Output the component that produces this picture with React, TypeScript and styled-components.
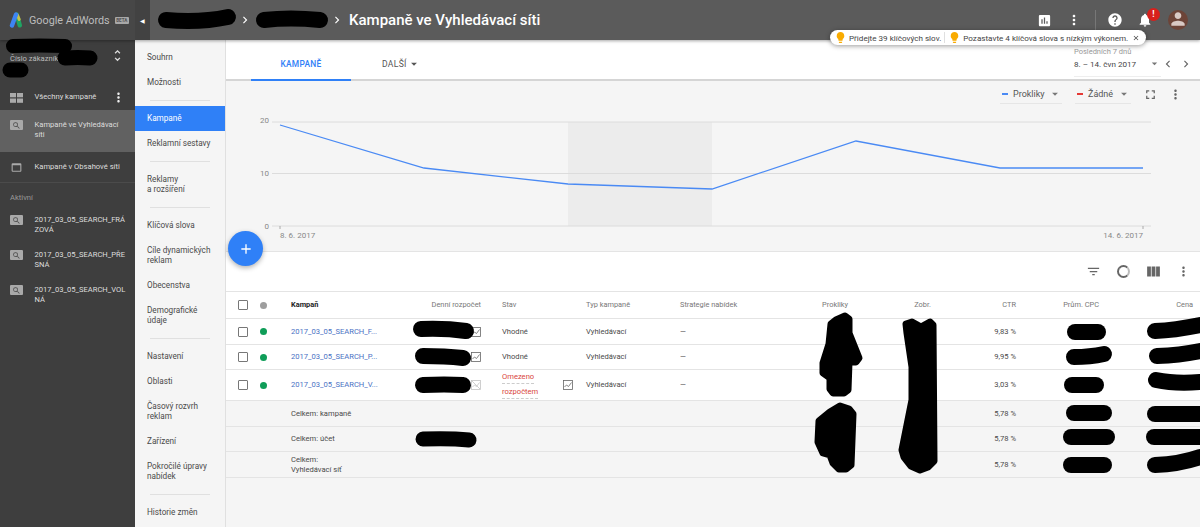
import React from 'react';
import styled, { createGlobalStyle } from 'styled-components';
import {
  MdArrowDropDown,
  MdChevronLeft,
  MdChevronRight,
  MdClose,
  MdFilterList,
  MdFullscreen,
  MdHelp,
  MdLightbulb,
  MdMoreVert,
  MdNotifications,
  MdPerson,
  MdSearch,
  MdViewColumn,
  MdWebAsset,
  MdAssessment,
  MdUnfoldMore,
  MdAdd,
} from 'react-icons/md';

const GlobalStyle = createGlobalStyle`
  html, body {
    margin: 0;
    height: 100%;
    overflow: hidden;
  }
  body {
    font-family: Roboto, "Liberation Sans", sans-serif;
    font-size: 7.6px;
    color: #4a4a4a;
    background: #f5f5f5;
  }
  * {
    box-sizing: border-box;
  }
`;

const Page = styled.div`
  position: relative;
  width: 1200px;
  height: 527px;
  overflow: hidden;
  display: flex;
  flex-direction: column;
`;

/* ---------- header ---------- */

const Header = styled.header`
  position: relative;
  z-index: 3;
  height: 40px;
  flex: none;
  display: flex;
  align-items: center;
  background: #5b5b5b;
  box-shadow: 0 1px 3px rgba(0, 0, 0, 0.35);
  color: #fff;
`;

const Brand = styled.div`
  width: 135px;
  height: 100%;
  flex: none;
  display: flex;
  align-items: center;
  padding-left: 9px;
  background: #474747;
`;

const BrandName = styled.span`
  margin-left: 4px;
  font-size: 10.8px;
  color: #bdbdbd;
  white-space: nowrap;
`;

const BetaTag = styled.span`
  margin-left: 5px;
  padding: 1px 1.5px;
  border-radius: 1px;
  background: #a8a8a8;
  color: #555;
  font-size: 4.6px;
  font-weight: 700;
`;

const Collapse = styled.div`
  width: 15px;
  height: 100%;
  flex: none;
  display: flex;
  align-items: center;
  justify-content: center;
  background: #424242;
  font-size: 6px;
`;

const Crumbs = styled.div`
  flex: 1;
  display: flex;
  align-items: center;
  padding-left: 8px;
`;

const CrumbSlot = styled.span<{ $w: number }>`
  width: ${(p) => p.$w}px;
`;

const Title = styled.h1`
  margin: 0 0 0 5px;
  font-size: 15px;
  font-weight: 500;
  color: #fff;
`;

const HeaderIcons = styled.div`
  display: flex;
  align-items: center;
  padding-right: 12px;
`;

const HeaderIcon = styled.span`
  position: relative;
  width: 30px;
  display: flex;
  align-items: center;
  justify-content: center;
`;

const HeaderRule = styled.span`
  width: 1px;
  height: 20px;
  margin: 0 4px 0 6px;
  background: #777;
`;

const AlertBadge = styled.span`
  position: absolute;
  top: -4px;
  left: 17px;
  width: 13px;
  height: 13px;
  border-radius: 50%;
  background: #d8201c;
  color: #fff;
  font-size: 8.5px;
  font-weight: 700;
  line-height: 13px;
  text-align: center;
`;

const Avatar = styled.span`
  width: 20px;
  height: 20px;
  margin-left: 8px;
  border-radius: 50%;
  overflow: hidden;
  display: flex;
  align-items: flex-end;
  justify-content: center;
  background: #6d4438;
  color: #d9c9c4;
`;

const Hints = styled.div`
  position: absolute;
  z-index: 4;
  top: 30px;
  left: 830px;
  width: 316px;
  height: 15px;
  padding: 0 6px 0 4px;
  border-radius: 8px;
  background: #fff;
  box-shadow: 0 1px 5px rgba(0, 0, 0, 0.4);
  display: flex;
  align-items: center;
  font-size: 8.1px;
  color: #444;
  white-space: nowrap;
`;

const HintBulb = styled(MdLightbulb)`
  flex: none;
  color: #f9ab00;
  margin-right: 2px;
`;

const HintGap = styled.span`
  width: 1px;
  height: 11px;
  margin: 0 3px;
  background: #e0e0e0;
`;

const HintClose = styled(MdClose)`
  margin-left: auto;
`;

/* ---------- sidebar ---------- */

const Body = styled.div`
  flex: 1;
  min-height: 0;
  display: flex;
`;

const Sidebar = styled.aside`
  width: 135px;
  flex: none;
  background: #3e3e3e;
  color: #ddd;
`;

const Account = styled.div`
  height: 45px;
  padding: 8px 10px 0 10px;
  display: flex;
  align-items: flex-start;
  justify-content: space-between;
  color: #bbb;
`;

const AccountLabel = styled.span`
  margin-top: 6px;
  line-height: 10px;
`;

const SideRow = styled.div<{ $active?: boolean; $h: number; $top?: boolean }>`
  height: ${(p) => p.$h}px;
  display: flex;
  align-items: ${(p) => (p.$top ? 'flex-start' : 'center')};
  padding-top: ${(p) => (p.$active ? 10 : 0)}px;
  padding-left: 10px;
  background: ${(p) => (p.$active ? '#616161' : 'transparent')};
  line-height: 10.3px;
`;

const SideIcon = styled.span`
  width: 13px;
  height: 10px;
  margin-right: 11.5px;
  flex: none;
  display: flex;
  align-items: center;
  justify-content: center;
  border-radius: 1px;
  background: #a9a9a9;
  color: #4a4a4a;
`;

const PlainIcon = styled.span`
  width: 13px;
  margin-right: 11.5px;
  flex: none;
  display: flex;
  align-items: center;
  justify-content: center;
  color: #aaa;
`;

const SideText = styled.span`
  flex: none;
  width: 91px;
  overflow-wrap: anywhere;
`;

const ShortText = styled(SideText)`
  width: 76px;
`;

const SideLabel = styled.div`
  height: 33px;
  border-top: 1px solid #4b4b4b;
  padding: 10px 0 0 10px;
  color: #999;
  line-height: 10px;
`;

/* ---------- second nav ---------- */

const Nav = styled.nav`
  width: 91px;
  flex: none;
  padding-top: 4.5px;
  background: #f5f5f5;
  border-right: 1px solid #e0e0e0;
  font-size: 8.2px;
`;

const NavItem = styled.div<{ $active?: boolean; $tall?: boolean }>`
  height: ${(p) => (p.$tall ? 35 : 25)}px;
  padding-left: 12px;
  display: flex;
  align-items: center;
  line-height: 10.5px;
  background: ${(p) => (p.$active ? '#2f80f7' : 'transparent')};
  color: ${(p) => (p.$active ? '#fff' : '#4a4a4a')};
`;

const NavRule = styled.div`
  height: 1px;
  margin: 5px 15px;
  background: #e0e0e0;
`;

/* ---------- main ---------- */

const Main = styled.main`
  flex: 1;
  min-width: 0;
  display: flex;
  flex-direction: column;
`;

const Tabs = styled.div`
  height: 41px;
  flex: none;
  display: flex;
  background: #fff;
  border-bottom: 2px solid #d5d5d5;
  padding-left: 25px;
`;

const Tab = styled.div`
  width: 100px;
  height: 41px;
  padding-top: 19px;
  text-align: center;
  border-bottom: 2px solid #2f80f7;
  color: #2f80f7;
  font-size: 8.4px;
  font-weight: 500;
  letter-spacing: 0.3px;
`;

const MoreTab = styled.div`
  margin-left: 31px;
  padding-top: 19px;
  display: flex;
  align-items: flex-start;
  color: #555;
  font-size: 8.6px;
  letter-spacing: 0.3px;
`;

const MoreCaret = styled(MdArrowDropDown)`
  margin-top: -2px;
`;

const DateBox = styled.div`
  margin-left: auto;
  padding: 7px 7px 0 0;
  display: flex;
  align-items: flex-start;
`;

const DateField = styled.div`
  width: 87px;
  height: 30px;
  border-bottom: 1px solid #eee;
  color: #444;
  font-size: 8.1px;
`;

const DateHint = styled.div`
  color: #999;
  font-size: 7.5px;
  line-height: 9px;
`;

const DateValue = styled.div`
  display: flex;
  align-items: center;
  justify-content: space-between;
  margin-top: 1px;
  line-height: 12px;
`;

const DateArrows = styled.div`
  display: flex;
  padding-top: 10px;
  color: #666;
  gap: 4px;
`;

const ChartPanel = styled.section`
  height: 171px;
  flex: none;
  background: #f5f5f5;
  border-bottom: 1px solid #e4e4e4;
  overflow: hidden;
`;

const ChartBar = styled.div`
  height: 31px;
  display: flex;
  justify-content: flex-end;
  align-items: flex-start;
  padding: 4px 14px 0 0;
  color: #555;
  font-size: 9px;
`;

const LegendPick = styled.div<{ $w: number; $gap: number }>`
  width: ${(p) => p.$w}px;
  height: 19px;
  margin-right: ${(p) => p.$gap}px;
  padding-left: 2px;
  display: flex;
  align-items: center;
  border-bottom: 1px solid #e6e6e6;
`;

const LegendSwatch = styled.span<{ $color: string }>`
  width: 6px;
  height: 2px;
  margin-right: 5px;
  background: ${(p) => p.$color};
`;

const LegendText = styled.span`
  flex: 1;
`;

const ChartIcon = styled.span`
  width: 22px;
  height: 19px;
  margin-left: 3px;
  display: flex;
  align-items: center;
  justify-content: center;
  color: #666;
`;

const ChartSvg = styled.svg`
  display: block;
  font-family: Roboto, "Liberation Sans", sans-serif;
`;

const Fab = styled.div`
  position: absolute;
  z-index: 2;
  top: 231px;
  left: 228px;
  width: 35px;
  height: 35px;
  border-radius: 50%;
  background: #2f80f7;
  color: #fff;
  box-shadow: 0 2px 5px rgba(0, 0, 0, 0.3);
  display: flex;
  align-items: center;
  justify-content: center;
`;

const TableBar = styled.div`
  height: 40px;
  flex: none;
  background: #fff;
  border-bottom: 1px solid #e4e4e4;
  display: flex;
  align-items: center;
  justify-content: flex-end;
  padding-right: 2px;
  color: #666;
`;

const TableIcon = styled.span`
  width: 30px;
  display: flex;
  justify-content: center;
`;

const Ring = styled.span`
  width: 13px;
  height: 13px;
  border: 2px solid #666;
  border-right-color: #bbb;
  border-radius: 50%;
`;

const TABLE_COLUMNS = '34px 8px 23px 110px 80px 21px 84px 94px 90px 78px 83px 85px 83px 94px 7px';

const Row = styled.div<{ $h: number; $total?: boolean }>`
  height: ${(p) => p.$h}px;
  flex: none;
  display: grid;
  grid-template-columns: ${TABLE_COLUMNS};
  align-items: center;
  background: ${(p) => (p.$total ? '#f5f5f5' : '#fff')};
  border-bottom: 1px solid #e4e4e4;
  line-height: 10px;
`;

const HeadCell = styled.div<{ $right?: boolean; $strong?: boolean }>`
  text-align: ${(p) => (p.$right ? 'right' : 'left')};
  color: ${(p) => (p.$strong ? '#222' : '#777')};
  font-weight: ${(p) => (p.$strong ? 700 : 400)};
  font-size: 7.4px;
  white-space: nowrap;
`;

const Cell = styled.div<{ $right?: boolean; $span?: number }>`
  text-align: ${(p) => (p.$right ? 'right' : 'left')};
  grid-column: ${(p) => (p.$span ? `span ${p.$span}` : 'auto')};
  white-space: nowrap;
`;

const CheckCell = styled.div`
  display: flex;
  justify-content: center;
`;

const Check = styled.span`
  width: 10px;
  height: 10px;
  border: 1.3px solid #777;
  border-radius: 1px;
`;

const Dot = styled.span<{ $color: string }>`
  display: block;
  width: 7px;
  height: 7px;
  border-radius: 50%;
  background: ${(p) => p.$color};
`;

const CampaignLink = styled.span`
  color: #4a72c4;
  white-space: nowrap;
`;

const BudgetCell = styled.div`
  display: flex;
  justify-content: flex-end;
`;

const LimitedCell = styled.div`
  display: flex;
  align-items: center;
  justify-content: space-between;
  padding-right: 13px;
`;

const Limited = styled.span`
  color: #d9453d;
  line-height: 13px;
`;

const LimitedWord = styled.span`
  display: block;
  margin-bottom: 1px;
  border-bottom: 1px dashed #ccc;
  width: fit-content;
`;

const TotalName = styled(Cell)`
  grid-column: 4;
  white-space: normal;
  line-height: 9.5px;
`;

const Filler = styled.div`
  flex: 1;
  background: #f5f5f5;
`;

const Redactions = styled.svg`
  position: absolute;
  z-index: 5;
  top: 0;
  left: 0;
  pointer-events: none;
`;

const Logo = () => (
  <svg width="16" height="16" viewBox="0 0 16 16">
    <path d="M10.5 13.5 L8 2.6" stroke="#1fa463" strokeWidth="4.4" strokeLinecap="round" transform="rotate(-3 8 8)" />
    <path d="M8.4 3 L10.2 7.4" stroke="#c9c24a" strokeWidth="3" strokeLinecap="round" />
    <path d="M3 13.5 L7 2.6" stroke="#3d84f3" strokeWidth="4.4" strokeLinecap="round" />
  </svg>
);

const GridIcon = () => (
  <svg width="13" height="10" viewBox="0 0 13 10" fill="#aaa">
    <rect x="0" y="0" width="6" height="4.3" />
    <rect x="7" y="0" width="6" height="4.3" />
    <rect x="0" y="5.5" width="6" height="4.3" />
    <rect x="7" y="5.5" width="6" height="4.3" />
  </svg>
);

const TrendBox = ({ muted }: { muted?: boolean }) => (
  <svg width="10" height="10" viewBox="0 0 10 10" fill="none" stroke={muted ? '#c4c4c4' : '#666'} strokeWidth="0.8">
    <rect x="0.5" y="0.5" width="9" height="9" />
    <polyline points="1.5,7 3.5,5 5.5,6.5 8.5,2.5" />
    {muted && <line x1="1" y1="1" x2="9" y2="9" />}
  </svg>
);

const chartPoints: [number, number][] = [
  [54, 3],
  [198, 46],
  [342, 62],
  [486, 67],
  [630, 19],
  [774, 46],
  [917, 46],
];

const Chart = () => (
  <ChartSvg width="974" height="139" viewBox="0 -10 974 139">
    <rect x="342" y="0" width="144" height="104" fill="#ececec" />
    {[0, 51.5, 104].map((y) => (
      <line key={y} x1="46" x2="925" y1={y} y2={y} stroke="#dcdcdc" strokeWidth="1" />
    ))}
    <text x="43" y="1" fontSize="8" fill="#888" textAnchor="end">20</text>
    <text x="43" y="54" fontSize="8" fill="#888" textAnchor="end">10</text>
    <text x="43" y="107" fontSize="8" fill="#888" textAnchor="end">0</text>
    <line x1="54" x2="54" y1="104" y2="107" stroke="#aaa" />
    <line x1="917" x2="917" y1="104" y2="107" stroke="#aaa" />
    <polyline
      points={chartPoints.map((p) => p.join(',')).join(' ')}
      fill="none"
      stroke="#4a8af4"
      strokeWidth="1.3"
    />
    <text x="54" y="116" fontSize="8" fill="#888">8. 6. 2017</text>
    <text x="917" y="116" fontSize="8" fill="#888" textAnchor="end">14. 6. 2017</text>
  </ChartSvg>
);

const strokes: { d: string; w: number }[] = [
  { d: 'M166 20 Q200 23 228 17', w: 16 },
  { d: 'M264 20 Q290 17 320 20', w: 16 },
  { d: 'M13 46 Q40 45 65 46', w: 14 },
  { d: 'M65 58 Q78 57 90 58', w: 15 },
  { d: 'M10 70 L21 70', w: 15 },
  { d: 'M421 329 Q445 328 466 331', w: 16 },
  { d: 'M423 356 Q445 356 463 358', w: 16 },
  { d: 'M423 385 Q445 384 463 385', w: 16 },
  { d: 'M423 439 Q450 438 469 440', w: 15 },
  { d: 'M1075 332 L1098 332', w: 16 },
  { d: 'M1074 357 Q1090 357 1104 354', w: 16 },
  { d: 'M1072 385 L1096 385', w: 16 },
  { d: 'M1074 413 L1104 413', w: 16 },
  { d: 'M1071 437 L1107 437', w: 16 },
  { d: 'M1071 465 L1104 465', w: 16 },
  { d: 'M1155 331 Q1175 330 1200 325', w: 16 },
  { d: 'M1157 356 Q1180 355 1200 351', w: 16 },
  { d: 'M1156 380 Q1175 384 1200 382', w: 16 },
  { d: 'M1155 414 L1200 414', w: 16 },
  { d: 'M1154 437 L1200 437', w: 16 },
  { d: 'M1155 465 Q1180 464 1200 457', w: 16 },
];

const blobs = [
  'M845 316 L849 319 L849 333 L859 358 L856 362 L849 362 L848 390 L844 393 L833 393 L830 389 L830 378 L823 373 L823 363 L829 344 L831 324 L836 320 Z',
  'M840 406 L849 409 L853 414 L851 465 L846 469 L839 469 L833 463 L830 455 L823 453 L818 442 L819 421 L830 412 Z',
  'M906 324 L912 322 L921 327 L930 322 L933 325 L934 461 L928 467 L920 470 L911 466 L904 457 L902 450 L912 400 L912 367 L907 333 Z',
];

const App = () => (
  <Page>
    <GlobalStyle />
    <Header>
      <Brand>
        <Logo />
        <BrandName>Google AdWords</BrandName>
        <BetaTag>BETA</BetaTag>
      </Brand>
      <Collapse>◀</Collapse>
      <Crumbs>
        <CrumbSlot $w={80} />
        <MdChevronRight size={14} />
        <CrumbSlot $w={78} />
        <MdChevronRight size={14} />
        <Title>Kampaně ve Vyhledávací síti</Title>
      </Crumbs>
      <HeaderIcons>
        <HeaderIcon>
          <MdAssessment size={15} />
        </HeaderIcon>
        <HeaderIcon>
          <MdMoreVert size={16} />
        </HeaderIcon>
        <HeaderRule />
        <HeaderIcon>
          <MdHelp size={16} />
        </HeaderIcon>
        <HeaderIcon>
          <MdNotifications size={16} />
          <AlertBadge>!</AlertBadge>
        </HeaderIcon>
        <Avatar>
          <MdPerson size={22} />
        </Avatar>
      </HeaderIcons>
    </Header>
    <Hints>
      <HintBulb size={13} />
      Přidejte 39 klíčových slov.
      <HintGap />
      <HintBulb size={13} />
      Pozastavte 4 klíčová slova s nízkým výkonem.
      <HintClose size={8} />
    </Hints>
    <Body>
      <Sidebar>
        <Account>
          <AccountLabel>Číslo zákazník</AccountLabel>
          <MdUnfoldMore size={15} color="#ddd" />
        </Account>
        <SideRow $h={25}>
          <PlainIcon>
            <GridIcon />
          </PlainIcon>
          <ShortText>Všechny kampaně</ShortText>
          <MdMoreVert size={15} color="#eee" />
        </SideRow>
        <SideRow $h={42} $active $top>
          <SideIcon>
            <MdSearch size={9} />
          </SideIcon>
          <SideText>Kampaně ve Vyhledávací síti</SideText>
        </SideRow>
        <SideRow $h={30}>
          <PlainIcon>
            <MdWebAsset size={15} />
          </PlainIcon>
          <SideText>Kampaně v Obsahové síti</SideText>
        </SideRow>
        <SideLabel>Aktivní</SideLabel>
        {['2017_03_05_SEARCH_FRÁZOVÁ', '2017_03_05_SEARCH_PŘESNÁ', '2017_03_05_SEARCH_VOLNÁ'].map((name) => (
          <SideRow $h={35} $top key={name}>
            <SideIcon>
              <MdSearch size={9} />
            </SideIcon>
            <SideText>{name}</SideText>
          </SideRow>
        ))}
      </Sidebar>
      <Nav>
        <NavItem>Souhrn</NavItem>
        <NavItem>Možnosti</NavItem>
        <NavRule />
        <NavItem $active>Kampaně</NavItem>
        <NavItem>Reklamní sestavy</NavItem>
        <NavRule />
        <NavItem $tall>
          Reklamy
          <br />a rozšíření
        </NavItem>
        <NavRule />
        <NavItem>Klíčová slova</NavItem>
        <NavItem $tall>
          Cíle dynamických
          <br />
          reklam
        </NavItem>
        <NavItem>Obecenstva</NavItem>
        <NavItem $tall>
          Demografické
          <br />
          údaje
        </NavItem>
        <NavRule />
        <NavItem>Nastavení</NavItem>
        <NavItem>Oblasti</NavItem>
        <NavItem $tall>
          Časový rozvrh
          <br />
          reklam
        </NavItem>
        <NavItem>Zařízení</NavItem>
        <NavItem $tall>
          Pokročilé úpravy
          <br />
          nabídek
        </NavItem>
        <NavRule />
        <NavItem>Historie změn</NavItem>
      </Nav>
      <Main>
        <Tabs>
          <Tab>KAMPANĚ</Tab>
          <MoreTab>
            DALŠÍ
            <MoreCaret size={14} />
          </MoreTab>
          <DateBox>
            <DateField>
              <DateHint>Posledních 7 dnů</DateHint>
              <DateValue>
                8. – 14. čvn 2017
                <MdArrowDropDown size={13} color="#777" />
              </DateValue>
            </DateField>
            <DateArrows>
              <MdChevronLeft size={14} />
              <MdChevronRight size={14} />
            </DateArrows>
          </DateBox>
        </Tabs>
        <ChartPanel>
          <ChartBar>
            <LegendPick $w={62} $gap={13}>
              <LegendSwatch $color="#4a8af4" />
              <LegendText>Prokliky</LegendText>
              <MdArrowDropDown size={14} color="#777" />
            </LegendPick>
            <LegendPick $w={56} $gap={5}>
              <LegendSwatch $color="#e53935" />
              <LegendText>Žádné</LegendText>
              <MdArrowDropDown size={14} color="#777" />
            </LegendPick>
            <ChartIcon>
              <MdFullscreen size={15} />
            </ChartIcon>
            <ChartIcon>
              <MdMoreVert size={15} />
            </ChartIcon>
          </ChartBar>
          <Chart />
        </ChartPanel>
        <Fab>
          <MdAdd size={16} />
        </Fab>
        <TableBar>
          <TableIcon>
            <MdFilterList size={15} />
          </TableIcon>
          <TableIcon>
            <Ring />
          </TableIcon>
          <TableIcon>
            <MdViewColumn size={17} />
          </TableIcon>
          <TableIcon>
            <MdMoreVert size={15} />
          </TableIcon>
        </TableBar>
        <Row $h={27}>
          <CheckCell>
            <Check />
          </CheckCell>
          <Dot $color="#9e9e9e" />
          <span />
          <HeadCell $strong>Kampaň</HeadCell>
          <HeadCell $right>Denní rozpočet</HeadCell>
          <span />
          <HeadCell>Stav</HeadCell>
          <HeadCell>Typ kampaně</HeadCell>
          <HeadCell>Strategie nabídek</HeadCell>
          <HeadCell $right>Prokliky</HeadCell>
          <HeadCell $right>Zobr.</HeadCell>
          <HeadCell $right>CTR</HeadCell>
          <HeadCell $right>Prům. CPC</HeadCell>
          <HeadCell $right>Cena</HeadCell>
        </Row>
        <Row $h={26}>
          <CheckCell>
            <Check />
          </CheckCell>
          <Dot $color="#0f9d58" />
          <span />
          <CampaignLink>2017_03_05_SEARCH_F...</CampaignLink>
          <BudgetCell>
            <TrendBox />
          </BudgetCell>
          <span />
          <Cell>Vhodné</Cell>
          <Cell>Vyhledávací</Cell>
          <Cell>—</Cell>
          <Cell $span={2} />
          <Cell $right>9,83 %</Cell>
        </Row>
        <Row $h={25}>
          <CheckCell>
            <Check />
          </CheckCell>
          <Dot $color="#0f9d58" />
          <span />
          <CampaignLink>2017_03_05_SEARCH_P...</CampaignLink>
          <BudgetCell>
            <TrendBox />
          </BudgetCell>
          <span />
          <Cell>Vhodné</Cell>
          <Cell>Vyhledávací</Cell>
          <Cell>—</Cell>
          <Cell $span={2} />
          <Cell $right>9,95 %</Cell>
        </Row>
        <Row $h={31}>
          <CheckCell>
            <Check />
          </CheckCell>
          <Dot $color="#0f9d58" />
          <span />
          <CampaignLink>2017_03_05_SEARCH_V...</CampaignLink>
          <BudgetCell>
            <TrendBox muted />
          </BudgetCell>
          <span />
          <LimitedCell>
            <Limited>
              <LimitedWord>Omezeno</LimitedWord>
              <LimitedWord>rozpočtem</LimitedWord>
            </Limited>
            <TrendBox />
          </LimitedCell>
          <Cell>Vyhledávací</Cell>
          <Cell>—</Cell>
          <Cell $span={2} />
          <Cell $right>3,03 %</Cell>
        </Row>
        <Row $h={26} $total>
          <TotalName>Celkem: kampaně</TotalName>
          <Cell $span={7} />
          <Cell $right>5,78 %</Cell>
        </Row>
        <Row $h={25} $total>
          <TotalName>Celkem: účet</TotalName>
          <Cell $span={7} />
          <Cell $right>5,78 %</Cell>
        </Row>
        <Row $h={26} $total>
          <TotalName>
            Celkem:
            <br />
            Vyhledávací síť
          </TotalName>
          <Cell $span={7} />
          <Cell $right>5,78 %</Cell>
        </Row>
        <Filler />
      </Main>
    </Body>
    <Redactions width="1200" height="527" viewBox="0 0 1200 527">
      {strokes.map((s) => (
        <path key={s.d} d={s.d} fill="none" stroke="#000" strokeWidth={s.w} strokeLinecap="round" />
      ))}
      {blobs.map((d) => (
        <path key={d} d={d} fill="#000" stroke="#000" strokeWidth="7" strokeLinejoin="round" />
      ))}
    </Redactions>
  </Page>
);

export default App;
